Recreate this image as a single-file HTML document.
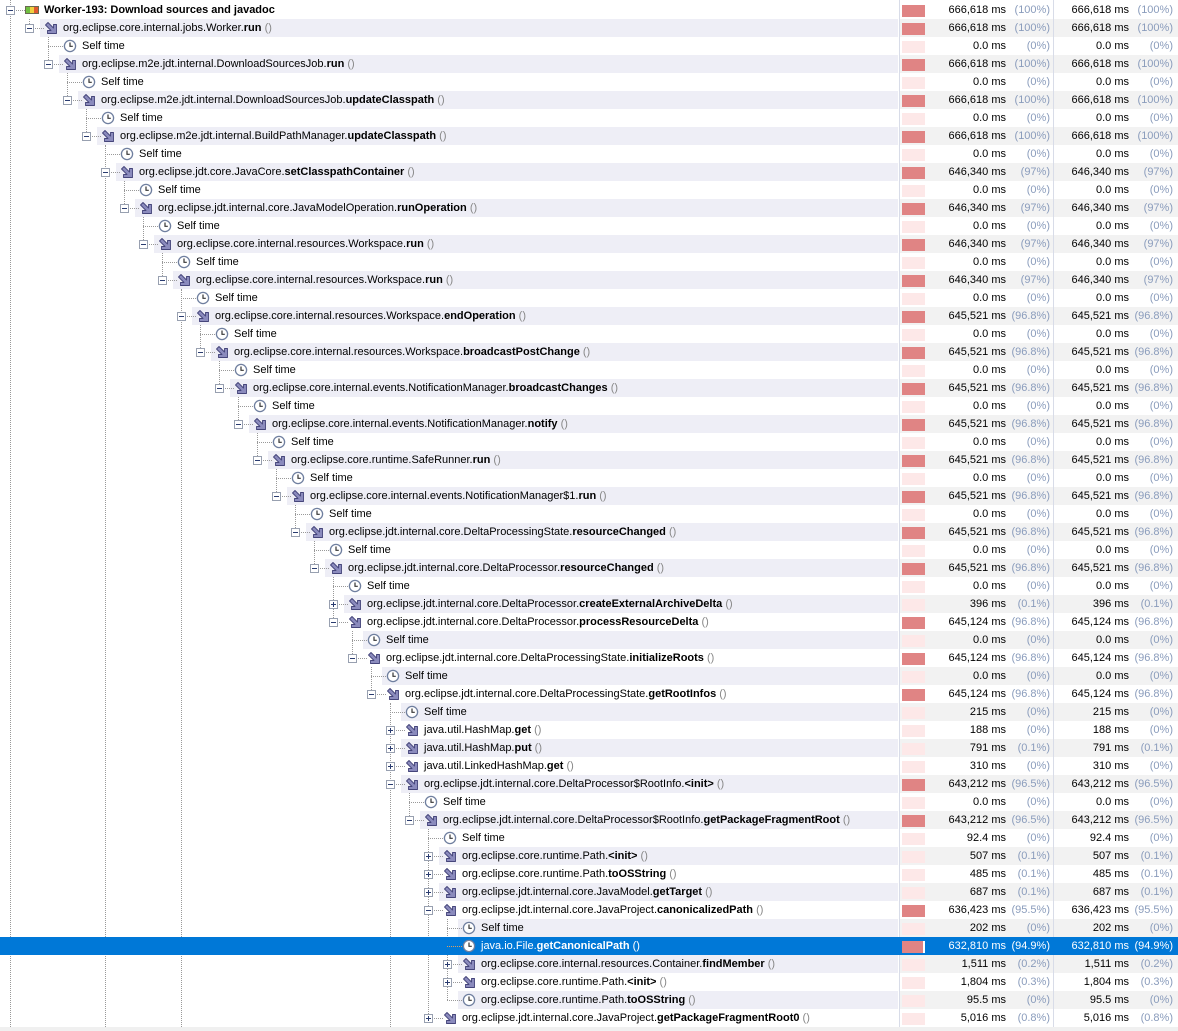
<!DOCTYPE html>
<html><head><meta charset="utf-8"><style>
*{margin:0;padding:0;box-sizing:border-box}
body{width:1178px;height:1031px;overflow:hidden;background:#fff;font-family:Tahoma,"Liberation Sans",sans-serif;font-size:11px;color:#000;position:relative}
.r{position:absolute;left:0;width:1178px;height:18px}
.o::after{content:"";position:absolute;left:900px;right:0;top:0;bottom:0;background:#f2f2f2;z-index:0}
.sh{position:absolute;top:0;bottom:0;right:280px;background:#eeeef6}
.t{position:absolute;top:0;height:18px;white-space:nowrap;z-index:2}
.h{position:absolute;left:4px;top:9px;width:15px;border-top:1px dotted #999}
.x{position:absolute;left:0;top:5px;width:9px;height:9px;border:1px solid #98a0b0;background:#fff;z-index:1}
.x::before{content:"";position:absolute;left:1px;top:3px;width:5px;height:1px;background:#2a3c70}
.x.p::after{content:"";position:absolute;left:3px;top:1px;width:1px;height:5px;background:#2a3c70}
.ic{position:absolute;left:19px;top:2px;width:14px;height:14px}
.tx{position:absolute;left:38px;top:2px;line-height:14px}
.tx q{color:#888;quotes:none}
.vl{position:absolute;border-left:1px dotted #999;width:0;z-index:1}
.bar{position:absolute;left:902px;top:4px;width:23px;height:12px;background:#fde8e8;z-index:1}
.bar.f{background:#e08484}
s{position:absolute;top:2px;line-height:14px;text-decoration:none;z-index:1;white-space:nowrap}
.v1{right:172px}.p1{right:128px;color:#8a9cbc}.v2{right:49px}.p2{right:5px;color:#8a9cbc}
.cl{position:absolute;top:0;height:1027px;width:1px;background:#d8dce8;z-index:3}
.sel{background:#0078d7;color:#fff;z-index:4}
.sel .p1,.sel .p2,.sel .tx q{color:#fff}
.sel .h{border-top-color:#e0a060}
</style></head><body>
<svg width="0" height="0" style="position:absolute">
<defs>
<symbol id="a" viewBox="0 0 14 14"><path d="M1.5 4 L4 1.5 L9.5 7 V3.5 H12.5 V12.5 H3.5 V9.5 H7 Z" fill="#8b8bbd" stroke="#45457a" stroke-width="0.9" stroke-linejoin="round"/></symbol>
<symbol id="c" viewBox="0 0 14 14"><circle cx="7" cy="7" r="5.6" fill="#fff" stroke="#6f7f9f" stroke-width="1.3"/><path d="M7 3.5 V7.3 H9.8" fill="none" stroke="#333" stroke-width="1.2"/></symbol>
</defs></svg>

<div class="vl" style="left:10px;top:0;height:1031px"></div>
<div class="vl" style="left:29px;top:19px;height:9px"></div>
<div class="vl" style="left:48px;top:37px;height:27px"></div>
<div class="vl" style="left:67px;top:73px;height:27px"></div>
<div class="vl" style="left:86px;top:109px;height:27px"></div>
<div class="vl" style="left:105px;top:145px;height:886px"></div>
<div class="vl" style="left:124px;top:181px;height:27px"></div>
<div class="vl" style="left:143px;top:217px;height:27px"></div>
<div class="vl" style="left:162px;top:253px;height:27px"></div>
<div class="vl" style="left:181px;top:289px;height:742px"></div>
<div class="vl" style="left:200px;top:325px;height:27px"></div>
<div class="vl" style="left:219px;top:361px;height:27px"></div>
<div class="vl" style="left:238px;top:397px;height:27px"></div>
<div class="vl" style="left:257px;top:433px;height:27px"></div>
<div class="vl" style="left:276px;top:469px;height:27px"></div>
<div class="vl" style="left:295px;top:505px;height:27px"></div>
<div class="vl" style="left:314px;top:541px;height:27px"></div>
<div class="vl" style="left:333px;top:577px;height:45px"></div>
<div class="vl" style="left:352px;top:631px;height:27px"></div>
<div class="vl" style="left:371px;top:667px;height:27px"></div>
<div class="vl" style="left:390px;top:703px;height:328px"></div>
<div class="vl" style="left:409px;top:793px;height:27px"></div>
<div class="vl" style="left:428px;top:829px;height:189px"></div>
<div class="vl" style="left:447px;top:919px;height:81px"></div>

<div class="r" style="top:1px"><div class="t" style="left:6px"><i class="h"></i><i class="x"></i><svg class="ic" viewBox="0 0 14 14"><rect x="0.5" y="3.5" width="13" height="7" fill="#f0d040" stroke="#6a6a50"/><rect x="1" y="4" width="4" height="6" fill="#70c040"/><rect x="9" y="4" width="4" height="6" fill="#e05a30"/></svg><span class="tx"><b>Worker-193: Download sources and javadoc</b></span></div><i class="bar f"></i><s class="v1">666,618 ms</s><s class="p1">(100%)</s><s class="v2">666,618 ms</s><s class="p2">(100%)</s></div>
<div class="r o" style="top:19px"><b class="sh" style="left:40px"></b><div class="t" style="left:25px"><i class="h"></i><i class="x"></i><svg class="ic"><use href="#a"/></svg><span class="tx">org.eclipse.core.internal.jobs.Worker.<b>run</b> <q>()</q></span></div><i class="bar f"></i><s class="v1">666,618 ms</s><s class="p1">(100%)</s><s class="v2">666,618 ms</s><s class="p2">(100%)</s></div>
<div class="r" style="top:37px"><div class="t" style="left:44px"><i class="h"></i><svg class="ic"><use href="#c"/></svg><span class="tx">Self time</span></div><i class="bar"></i><s class="v1">0.0 ms</s><s class="p1">(0%)</s><s class="v2">0.0 ms</s><s class="p2">(0%)</s></div>
<div class="r o" style="top:55px"><b class="sh" style="left:59px"></b><div class="t" style="left:44px"><i class="h"></i><i class="x"></i><svg class="ic"><use href="#a"/></svg><span class="tx">org.eclipse.m2e.jdt.internal.DownloadSourcesJob.<b>run</b> <q>()</q></span></div><i class="bar f"></i><s class="v1">666,618 ms</s><s class="p1">(100%)</s><s class="v2">666,618 ms</s><s class="p2">(100%)</s></div>
<div class="r" style="top:73px"><div class="t" style="left:63px"><i class="h"></i><svg class="ic"><use href="#c"/></svg><span class="tx">Self time</span></div><i class="bar"></i><s class="v1">0.0 ms</s><s class="p1">(0%)</s><s class="v2">0.0 ms</s><s class="p2">(0%)</s></div>
<div class="r o" style="top:91px"><b class="sh" style="left:78px"></b><div class="t" style="left:63px"><i class="h"></i><i class="x"></i><svg class="ic"><use href="#a"/></svg><span class="tx">org.eclipse.m2e.jdt.internal.DownloadSourcesJob.<b>updateClasspath</b> <q>()</q></span></div><i class="bar f"></i><s class="v1">666,618 ms</s><s class="p1">(100%)</s><s class="v2">666,618 ms</s><s class="p2">(100%)</s></div>
<div class="r" style="top:109px"><div class="t" style="left:82px"><i class="h"></i><svg class="ic"><use href="#c"/></svg><span class="tx">Self time</span></div><i class="bar"></i><s class="v1">0.0 ms</s><s class="p1">(0%)</s><s class="v2">0.0 ms</s><s class="p2">(0%)</s></div>
<div class="r o" style="top:127px"><b class="sh" style="left:97px"></b><div class="t" style="left:82px"><i class="h"></i><i class="x"></i><svg class="ic"><use href="#a"/></svg><span class="tx">org.eclipse.m2e.jdt.internal.BuildPathManager.<b>updateClasspath</b> <q>()</q></span></div><i class="bar f"></i><s class="v1">666,618 ms</s><s class="p1">(100%)</s><s class="v2">666,618 ms</s><s class="p2">(100%)</s></div>
<div class="r" style="top:145px"><div class="t" style="left:101px"><i class="h"></i><svg class="ic"><use href="#c"/></svg><span class="tx">Self time</span></div><i class="bar"></i><s class="v1">0.0 ms</s><s class="p1">(0%)</s><s class="v2">0.0 ms</s><s class="p2">(0%)</s></div>
<div class="r o" style="top:163px"><b class="sh" style="left:116px"></b><div class="t" style="left:101px"><i class="h"></i><i class="x"></i><svg class="ic"><use href="#a"/></svg><span class="tx">org.eclipse.jdt.core.JavaCore.<b>setClasspathContainer</b> <q>()</q></span></div><i class="bar f"></i><s class="v1">646,340 ms</s><s class="p1">(97%)</s><s class="v2">646,340 ms</s><s class="p2">(97%)</s></div>
<div class="r" style="top:181px"><div class="t" style="left:120px"><i class="h"></i><svg class="ic"><use href="#c"/></svg><span class="tx">Self time</span></div><i class="bar"></i><s class="v1">0.0 ms</s><s class="p1">(0%)</s><s class="v2">0.0 ms</s><s class="p2">(0%)</s></div>
<div class="r o" style="top:199px"><b class="sh" style="left:135px"></b><div class="t" style="left:120px"><i class="h"></i><i class="x"></i><svg class="ic"><use href="#a"/></svg><span class="tx">org.eclipse.jdt.internal.core.JavaModelOperation.<b>runOperation</b> <q>()</q></span></div><i class="bar f"></i><s class="v1">646,340 ms</s><s class="p1">(97%)</s><s class="v2">646,340 ms</s><s class="p2">(97%)</s></div>
<div class="r" style="top:217px"><div class="t" style="left:139px"><i class="h"></i><svg class="ic"><use href="#c"/></svg><span class="tx">Self time</span></div><i class="bar"></i><s class="v1">0.0 ms</s><s class="p1">(0%)</s><s class="v2">0.0 ms</s><s class="p2">(0%)</s></div>
<div class="r o" style="top:235px"><b class="sh" style="left:154px"></b><div class="t" style="left:139px"><i class="h"></i><i class="x"></i><svg class="ic"><use href="#a"/></svg><span class="tx">org.eclipse.core.internal.resources.Workspace.<b>run</b> <q>()</q></span></div><i class="bar f"></i><s class="v1">646,340 ms</s><s class="p1">(97%)</s><s class="v2">646,340 ms</s><s class="p2">(97%)</s></div>
<div class="r" style="top:253px"><div class="t" style="left:158px"><i class="h"></i><svg class="ic"><use href="#c"/></svg><span class="tx">Self time</span></div><i class="bar"></i><s class="v1">0.0 ms</s><s class="p1">(0%)</s><s class="v2">0.0 ms</s><s class="p2">(0%)</s></div>
<div class="r o" style="top:271px"><b class="sh" style="left:173px"></b><div class="t" style="left:158px"><i class="h"></i><i class="x"></i><svg class="ic"><use href="#a"/></svg><span class="tx">org.eclipse.core.internal.resources.Workspace.<b>run</b> <q>()</q></span></div><i class="bar f"></i><s class="v1">646,340 ms</s><s class="p1">(97%)</s><s class="v2">646,340 ms</s><s class="p2">(97%)</s></div>
<div class="r" style="top:289px"><div class="t" style="left:177px"><i class="h"></i><svg class="ic"><use href="#c"/></svg><span class="tx">Self time</span></div><i class="bar"></i><s class="v1">0.0 ms</s><s class="p1">(0%)</s><s class="v2">0.0 ms</s><s class="p2">(0%)</s></div>
<div class="r o" style="top:307px"><b class="sh" style="left:192px"></b><div class="t" style="left:177px"><i class="h"></i><i class="x"></i><svg class="ic"><use href="#a"/></svg><span class="tx">org.eclipse.core.internal.resources.Workspace.<b>endOperation</b> <q>()</q></span></div><i class="bar f"></i><s class="v1">645,521 ms</s><s class="p1">(96.8%)</s><s class="v2">645,521 ms</s><s class="p2">(96.8%)</s></div>
<div class="r" style="top:325px"><div class="t" style="left:196px"><i class="h"></i><svg class="ic"><use href="#c"/></svg><span class="tx">Self time</span></div><i class="bar"></i><s class="v1">0.0 ms</s><s class="p1">(0%)</s><s class="v2">0.0 ms</s><s class="p2">(0%)</s></div>
<div class="r o" style="top:343px"><b class="sh" style="left:211px"></b><div class="t" style="left:196px"><i class="h"></i><i class="x"></i><svg class="ic"><use href="#a"/></svg><span class="tx">org.eclipse.core.internal.resources.Workspace.<b>broadcastPostChange</b> <q>()</q></span></div><i class="bar f"></i><s class="v1">645,521 ms</s><s class="p1">(96.8%)</s><s class="v2">645,521 ms</s><s class="p2">(96.8%)</s></div>
<div class="r" style="top:361px"><div class="t" style="left:215px"><i class="h"></i><svg class="ic"><use href="#c"/></svg><span class="tx">Self time</span></div><i class="bar"></i><s class="v1">0.0 ms</s><s class="p1">(0%)</s><s class="v2">0.0 ms</s><s class="p2">(0%)</s></div>
<div class="r o" style="top:379px"><b class="sh" style="left:230px"></b><div class="t" style="left:215px"><i class="h"></i><i class="x"></i><svg class="ic"><use href="#a"/></svg><span class="tx">org.eclipse.core.internal.events.NotificationManager.<b>broadcastChanges</b> <q>()</q></span></div><i class="bar f"></i><s class="v1">645,521 ms</s><s class="p1">(96.8%)</s><s class="v2">645,521 ms</s><s class="p2">(96.8%)</s></div>
<div class="r" style="top:397px"><div class="t" style="left:234px"><i class="h"></i><svg class="ic"><use href="#c"/></svg><span class="tx">Self time</span></div><i class="bar"></i><s class="v1">0.0 ms</s><s class="p1">(0%)</s><s class="v2">0.0 ms</s><s class="p2">(0%)</s></div>
<div class="r o" style="top:415px"><b class="sh" style="left:249px"></b><div class="t" style="left:234px"><i class="h"></i><i class="x"></i><svg class="ic"><use href="#a"/></svg><span class="tx">org.eclipse.core.internal.events.NotificationManager.<b>notify</b> <q>()</q></span></div><i class="bar f"></i><s class="v1">645,521 ms</s><s class="p1">(96.8%)</s><s class="v2">645,521 ms</s><s class="p2">(96.8%)</s></div>
<div class="r" style="top:433px"><div class="t" style="left:253px"><i class="h"></i><svg class="ic"><use href="#c"/></svg><span class="tx">Self time</span></div><i class="bar"></i><s class="v1">0.0 ms</s><s class="p1">(0%)</s><s class="v2">0.0 ms</s><s class="p2">(0%)</s></div>
<div class="r o" style="top:451px"><b class="sh" style="left:268px"></b><div class="t" style="left:253px"><i class="h"></i><i class="x"></i><svg class="ic"><use href="#a"/></svg><span class="tx">org.eclipse.core.runtime.SafeRunner.<b>run</b> <q>()</q></span></div><i class="bar f"></i><s class="v1">645,521 ms</s><s class="p1">(96.8%)</s><s class="v2">645,521 ms</s><s class="p2">(96.8%)</s></div>
<div class="r" style="top:469px"><div class="t" style="left:272px"><i class="h"></i><svg class="ic"><use href="#c"/></svg><span class="tx">Self time</span></div><i class="bar"></i><s class="v1">0.0 ms</s><s class="p1">(0%)</s><s class="v2">0.0 ms</s><s class="p2">(0%)</s></div>
<div class="r o" style="top:487px"><b class="sh" style="left:287px"></b><div class="t" style="left:272px"><i class="h"></i><i class="x"></i><svg class="ic"><use href="#a"/></svg><span class="tx">org.eclipse.core.internal.events.NotificationManager$1.<b>run</b> <q>()</q></span></div><i class="bar f"></i><s class="v1">645,521 ms</s><s class="p1">(96.8%)</s><s class="v2">645,521 ms</s><s class="p2">(96.8%)</s></div>
<div class="r" style="top:505px"><div class="t" style="left:291px"><i class="h"></i><svg class="ic"><use href="#c"/></svg><span class="tx">Self time</span></div><i class="bar"></i><s class="v1">0.0 ms</s><s class="p1">(0%)</s><s class="v2">0.0 ms</s><s class="p2">(0%)</s></div>
<div class="r o" style="top:523px"><b class="sh" style="left:306px"></b><div class="t" style="left:291px"><i class="h"></i><i class="x"></i><svg class="ic"><use href="#a"/></svg><span class="tx">org.eclipse.jdt.internal.core.DeltaProcessingState.<b>resourceChanged</b> <q>()</q></span></div><i class="bar f"></i><s class="v1">645,521 ms</s><s class="p1">(96.8%)</s><s class="v2">645,521 ms</s><s class="p2">(96.8%)</s></div>
<div class="r" style="top:541px"><div class="t" style="left:310px"><i class="h"></i><svg class="ic"><use href="#c"/></svg><span class="tx">Self time</span></div><i class="bar"></i><s class="v1">0.0 ms</s><s class="p1">(0%)</s><s class="v2">0.0 ms</s><s class="p2">(0%)</s></div>
<div class="r o" style="top:559px"><b class="sh" style="left:325px"></b><div class="t" style="left:310px"><i class="h"></i><i class="x"></i><svg class="ic"><use href="#a"/></svg><span class="tx">org.eclipse.jdt.internal.core.DeltaProcessor.<b>resourceChanged</b> <q>()</q></span></div><i class="bar f"></i><s class="v1">645,521 ms</s><s class="p1">(96.8%)</s><s class="v2">645,521 ms</s><s class="p2">(96.8%)</s></div>
<div class="r" style="top:577px"><div class="t" style="left:329px"><i class="h"></i><svg class="ic"><use href="#c"/></svg><span class="tx">Self time</span></div><i class="bar"></i><s class="v1">0.0 ms</s><s class="p1">(0%)</s><s class="v2">0.0 ms</s><s class="p2">(0%)</s></div>
<div class="r o" style="top:595px"><b class="sh" style="left:344px"></b><div class="t" style="left:329px"><i class="h"></i><i class="x p"></i><svg class="ic"><use href="#a"/></svg><span class="tx">org.eclipse.jdt.internal.core.DeltaProcessor.<b>createExternalArchiveDelta</b> <q>()</q></span></div><i class="bar"></i><s class="v1">396 ms</s><s class="p1">(0.1%)</s><s class="v2">396 ms</s><s class="p2">(0.1%)</s></div>
<div class="r" style="top:613px"><div class="t" style="left:329px"><i class="h"></i><i class="x"></i><svg class="ic"><use href="#a"/></svg><span class="tx">org.eclipse.jdt.internal.core.DeltaProcessor.<b>processResourceDelta</b> <q>()</q></span></div><i class="bar f"></i><s class="v1">645,124 ms</s><s class="p1">(96.8%)</s><s class="v2">645,124 ms</s><s class="p2">(96.8%)</s></div>
<div class="r o" style="top:631px"><b class="sh" style="left:363px"></b><div class="t" style="left:348px"><i class="h"></i><svg class="ic"><use href="#c"/></svg><span class="tx">Self time</span></div><i class="bar"></i><s class="v1">0.0 ms</s><s class="p1">(0%)</s><s class="v2">0.0 ms</s><s class="p2">(0%)</s></div>
<div class="r" style="top:649px"><div class="t" style="left:348px"><i class="h"></i><i class="x"></i><svg class="ic"><use href="#a"/></svg><span class="tx">org.eclipse.jdt.internal.core.DeltaProcessingState.<b>initializeRoots</b> <q>()</q></span></div><i class="bar f"></i><s class="v1">645,124 ms</s><s class="p1">(96.8%)</s><s class="v2">645,124 ms</s><s class="p2">(96.8%)</s></div>
<div class="r o" style="top:667px"><b class="sh" style="left:382px"></b><div class="t" style="left:367px"><i class="h"></i><svg class="ic"><use href="#c"/></svg><span class="tx">Self time</span></div><i class="bar"></i><s class="v1">0.0 ms</s><s class="p1">(0%)</s><s class="v2">0.0 ms</s><s class="p2">(0%)</s></div>
<div class="r" style="top:685px"><div class="t" style="left:367px"><i class="h"></i><i class="x"></i><svg class="ic"><use href="#a"/></svg><span class="tx">org.eclipse.jdt.internal.core.DeltaProcessingState.<b>getRootInfos</b> <q>()</q></span></div><i class="bar f"></i><s class="v1">645,124 ms</s><s class="p1">(96.8%)</s><s class="v2">645,124 ms</s><s class="p2">(96.8%)</s></div>
<div class="r o" style="top:703px"><b class="sh" style="left:401px"></b><div class="t" style="left:386px"><i class="h"></i><svg class="ic"><use href="#c"/></svg><span class="tx">Self time</span></div><i class="bar"></i><s class="v1">215 ms</s><s class="p1">(0%)</s><s class="v2">215 ms</s><s class="p2">(0%)</s></div>
<div class="r" style="top:721px"><div class="t" style="left:386px"><i class="h"></i><i class="x p"></i><svg class="ic"><use href="#a"/></svg><span class="tx">java.util.HashMap.<b>get</b> <q>()</q></span></div><i class="bar"></i><s class="v1">188 ms</s><s class="p1">(0%)</s><s class="v2">188 ms</s><s class="p2">(0%)</s></div>
<div class="r o" style="top:739px"><b class="sh" style="left:401px"></b><div class="t" style="left:386px"><i class="h"></i><i class="x p"></i><svg class="ic"><use href="#a"/></svg><span class="tx">java.util.HashMap.<b>put</b> <q>()</q></span></div><i class="bar"></i><s class="v1">791 ms</s><s class="p1">(0.1%)</s><s class="v2">791 ms</s><s class="p2">(0.1%)</s></div>
<div class="r" style="top:757px"><div class="t" style="left:386px"><i class="h"></i><i class="x p"></i><svg class="ic"><use href="#a"/></svg><span class="tx">java.util.LinkedHashMap.<b>get</b> <q>()</q></span></div><i class="bar"></i><s class="v1">310 ms</s><s class="p1">(0%)</s><s class="v2">310 ms</s><s class="p2">(0%)</s></div>
<div class="r o" style="top:775px"><b class="sh" style="left:401px"></b><div class="t" style="left:386px"><i class="h"></i><i class="x"></i><svg class="ic"><use href="#a"/></svg><span class="tx">org.eclipse.jdt.internal.core.DeltaProcessor$RootInfo.<b>&lt;init&gt;</b> <q>()</q></span></div><i class="bar f"></i><s class="v1">643,212 ms</s><s class="p1">(96.5%)</s><s class="v2">643,212 ms</s><s class="p2">(96.5%)</s></div>
<div class="r" style="top:793px"><div class="t" style="left:405px"><i class="h"></i><svg class="ic"><use href="#c"/></svg><span class="tx">Self time</span></div><i class="bar"></i><s class="v1">0.0 ms</s><s class="p1">(0%)</s><s class="v2">0.0 ms</s><s class="p2">(0%)</s></div>
<div class="r o" style="top:811px"><b class="sh" style="left:420px"></b><div class="t" style="left:405px"><i class="h"></i><i class="x"></i><svg class="ic"><use href="#a"/></svg><span class="tx">org.eclipse.jdt.internal.core.DeltaProcessor$RootInfo.<b>getPackageFragmentRoot</b> <q>()</q></span></div><i class="bar f"></i><s class="v1">643,212 ms</s><s class="p1">(96.5%)</s><s class="v2">643,212 ms</s><s class="p2">(96.5%)</s></div>
<div class="r" style="top:829px"><div class="t" style="left:424px"><i class="h"></i><svg class="ic"><use href="#c"/></svg><span class="tx">Self time</span></div><i class="bar"></i><s class="v1">92.4 ms</s><s class="p1">(0%)</s><s class="v2">92.4 ms</s><s class="p2">(0%)</s></div>
<div class="r o" style="top:847px"><b class="sh" style="left:439px"></b><div class="t" style="left:424px"><i class="h"></i><i class="x p"></i><svg class="ic"><use href="#a"/></svg><span class="tx">org.eclipse.core.runtime.Path.<b>&lt;init&gt;</b> <q>()</q></span></div><i class="bar"></i><s class="v1">507 ms</s><s class="p1">(0.1%)</s><s class="v2">507 ms</s><s class="p2">(0.1%)</s></div>
<div class="r" style="top:865px"><div class="t" style="left:424px"><i class="h"></i><i class="x p"></i><svg class="ic"><use href="#a"/></svg><span class="tx">org.eclipse.core.runtime.Path.<b>toOSString</b> <q>()</q></span></div><i class="bar"></i><s class="v1">485 ms</s><s class="p1">(0.1%)</s><s class="v2">485 ms</s><s class="p2">(0.1%)</s></div>
<div class="r o" style="top:883px"><b class="sh" style="left:439px"></b><div class="t" style="left:424px"><i class="h"></i><i class="x p"></i><svg class="ic"><use href="#a"/></svg><span class="tx">org.eclipse.jdt.internal.core.JavaModel.<b>getTarget</b> <q>()</q></span></div><i class="bar"></i><s class="v1">687 ms</s><s class="p1">(0.1%)</s><s class="v2">687 ms</s><s class="p2">(0.1%)</s></div>
<div class="r" style="top:901px"><div class="t" style="left:424px"><i class="h"></i><i class="x"></i><svg class="ic"><use href="#a"/></svg><span class="tx">org.eclipse.jdt.internal.core.JavaProject.<b>canonicalizedPath</b> <q>()</q></span></div><i class="bar f"></i><s class="v1">636,423 ms</s><s class="p1">(95.5%)</s><s class="v2">636,423 ms</s><s class="p2">(95.5%)</s></div>
<div class="r o" style="top:919px"><b class="sh" style="left:458px"></b><div class="t" style="left:443px"><i class="h"></i><svg class="ic"><use href="#c"/></svg><span class="tx">Self time</span></div><i class="bar"></i><s class="v1">202 ms</s><s class="p1">(0%)</s><s class="v2">202 ms</s><s class="p2">(0%)</s></div>
<div class="r sel" style="top:937px"><div class="t" style="left:443px"><i class="h"></i><svg class="ic"><use href="#c"/></svg><span class="tx">java.io.File.<b>getCanonicalPath</b> <q>()</q></span></div><i class="bar f" style="border-right:2px solid #fff"></i><s class="v1">632,810 ms</s><s class="p1">(94.9%)</s><s class="v2">632,810 ms</s><s class="p2">(94.9%)</s></div>
<div class="r o" style="top:955px"><b class="sh" style="left:458px"></b><div class="t" style="left:443px"><i class="h"></i><i class="x p"></i><svg class="ic"><use href="#a"/></svg><span class="tx">org.eclipse.core.internal.resources.Container.<b>findMember</b> <q>()</q></span></div><i class="bar"></i><s class="v1">1,511 ms</s><s class="p1">(0.2%)</s><s class="v2">1,511 ms</s><s class="p2">(0.2%)</s></div>
<div class="r" style="top:973px"><div class="t" style="left:443px"><i class="h"></i><i class="x p"></i><svg class="ic"><use href="#a"/></svg><span class="tx">org.eclipse.core.runtime.Path.<b>&lt;init&gt;</b> <q>()</q></span></div><i class="bar"></i><s class="v1">1,804 ms</s><s class="p1">(0.3%)</s><s class="v2">1,804 ms</s><s class="p2">(0.3%)</s></div>
<div class="r o" style="top:991px"><b class="sh" style="left:458px"></b><div class="t" style="left:443px"><i class="h"></i><svg class="ic"><use href="#c"/></svg><span class="tx">org.eclipse.core.runtime.Path.<b>toOSString</b> <q>()</q></span></div><i class="bar"></i><s class="v1">95.5 ms</s><s class="p1">(0%)</s><s class="v2">95.5 ms</s><s class="p2">(0%)</s></div>
<div class="r" style="top:1009px"><div class="t" style="left:424px"><i class="h"></i><i class="x p"></i><svg class="ic"><use href="#a"/></svg><span class="tx">org.eclipse.jdt.internal.core.JavaProject.<b>getPackageFragmentRoot0</b> <q>()</q></span></div><i class="bar"></i><s class="v1">5,016 ms</s><s class="p1">(0.8%)</s><s class="v2">5,016 ms</s><s class="p2">(0.8%)</s></div>

<div style="position:absolute;left:0;top:1027px;width:1178px;height:4px;background:#f0f0f0;z-index:5"></div>
<div class="cl" style="left:899px"></div>
<div class="cl" style="left:1053px"></div>
</body></html>
